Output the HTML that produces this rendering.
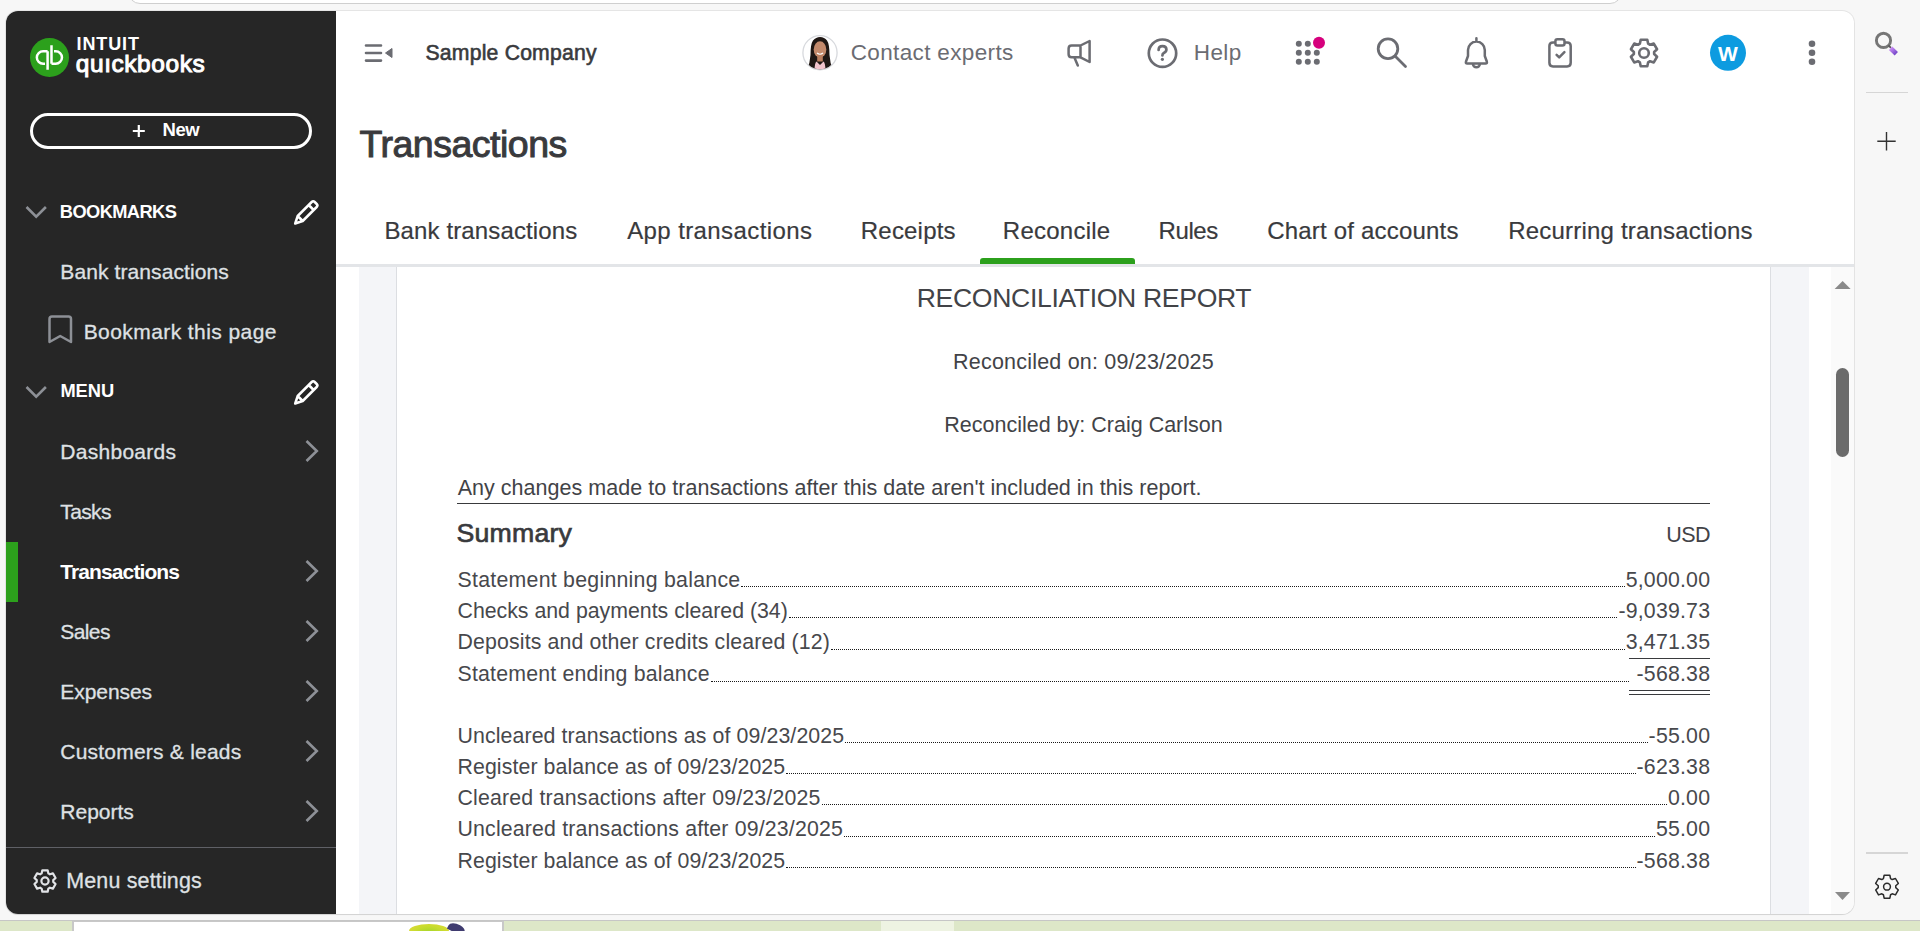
<!DOCTYPE html>
<html><head><meta charset="utf-8"><title>Transactions - Reconcile</title><style>
*{margin:0;padding:0}
html,body{width:1920px;height:931px;overflow:hidden;background:#f7f7f7}
body{position:relative;font-family:"Liberation Sans", sans-serif}
.a{position:absolute}
.t{position:absolute;white-space:nowrap;font-family:"Liberation Sans", sans-serif;z-index:2}
.row{position:absolute;z-index:2;left:457.5px;width:1252.5px;height:21.3px;display:flex;align-items:flex-end;font-size:21.3px;line-height:21.3px;color:#47484c;white-space:nowrap}
.row .lab{letter-spacing:0.35px}
.row .dots{flex:1;border-bottom:1px dotted #1a1a1a;margin:0 1px 4px 1px;height:0}
.row .num{letter-spacing:0.2px;margin-right:-0.2px}
svg.ov{position:absolute;left:0;top:0;z-index:1}
</style></head>
<body>
<div class="a" style="left:0px;top:0px;width:1920px;height:931px;background:#f7f7f7;"></div>
<div class="a" style="left:128px;top:-40px;width:1494px;height:44px;background:#ffffff;border:1px solid #cfcfcf;border-radius:12px;box-sizing:border-box;"></div>
<div class="a" style="left:0px;top:920px;width:1920px;height:11px;background:#dde7c8;"></div>
<div class="a" style="left:0px;top:920px;width:1920px;height:1px;background:#c6c6c6;"></div>
<div class="a" style="left:72px;top:921px;width:432px;height:10px;background:#ffffff;border:2px solid #c8c8c8;border-bottom:none;border-top-width:1px;box-sizing:border-box;"></div>
<div class="a" style="left:881px;top:921px;width:73px;height:10px;background:#eef3e2;"></div>
<div class="a" style="left:409px;top:924px;width:40px;height:14px;background:radial-gradient(ellipse at 50% 100%, #86cf2a 0%, #c8dc2e 60%, #e6d83a 100%);border-radius:50% 50% 0 0;"></div>
<div class="a" style="left:448px;top:924px;width:17px;height:9px;background:#3f3b6f;border-radius:90% 60% 0 0;transform:rotate(28deg);"></div>
<div class="a" style="left:6px;top:11px;width:1848px;height:903px;background:#ffffff;border-radius:12px;box-shadow:0 0 0 1px rgba(0,0,0,0.07), 0 1px 1px rgba(0,0,0,0.08);overflow:hidden;"></div>
<div class="a" style="left:6px;top:11px;width:330px;height:903px;background:#262626;border-radius:12px 0 0 12px;"></div>
<div class="t" style="left:76.50px;top:34.56px;font-size:18px;line-height:18px;font-weight:bold;color:#fff;letter-spacing:0.9px;">INTUIT</div>
<div class="t" style="left:75.80px;top:52.26px;font-size:24.5px;line-height:24.5px;font-weight:normal;color:#fff;letter-spacing:0.55px;-webkit-text-stroke:1.0px #fff;">qu&#305;ckbooks</div>
<div class="a" style="left:30px;top:113px;width:282px;height:36px;background:transparent;border:3px solid #fff;border-radius:18px;box-sizing:border-box;"></div>
<div class="t" style="left:162.50px;top:121.14px;font-size:18.5px;line-height:18.5px;font-weight:bold;color:#fff;letter-spacing:-0.4px;">New</div>
<div class="t" style="left:59.80px;top:202.51px;font-size:18.3px;line-height:18.3px;font-weight:bold;color:#fff;letter-spacing:-0.6px;">BOOKMARKS</div>
<div class="t" style="left:60.30px;top:261.32px;font-size:21px;line-height:21px;font-weight:normal;color:#dfe1e4;letter-spacing:0.1px;-webkit-text-stroke:0.3px #dfe1e4;">Bank transactions</div>
<div class="t" style="left:83.70px;top:321.22px;font-size:21px;line-height:21px;font-weight:normal;color:#dfe1e4;letter-spacing:0.42px;-webkit-text-stroke:0.3px #dfe1e4;">Bookmark this page</div>
<div class="t" style="left:60.40px;top:382.21px;font-size:18.3px;line-height:18.3px;font-weight:bold;color:#fff;letter-spacing:0px;">MENU</div>
<div class="t" style="left:60.30px;top:441.22px;font-size:21px;line-height:21px;font-weight:normal;color:#dfe1e4;letter-spacing:0.28px;-webkit-text-stroke:0.3px #dfe1e4;">Dashboards</div>
<div class="t" style="left:60.30px;top:501.22px;font-size:21px;line-height:21px;font-weight:normal;color:#dfe1e4;letter-spacing:-0.65px;-webkit-text-stroke:0.3px #dfe1e4;">Tasks</div>
<div class="t" style="left:60.30px;top:561.22px;font-size:21px;line-height:21px;font-weight:bold;color:#ffffff;letter-spacing:-0.9px;">Transactions</div>
<div class="t" style="left:60.30px;top:621.22px;font-size:21px;line-height:21px;font-weight:normal;color:#dfe1e4;letter-spacing:-0.6px;-webkit-text-stroke:0.3px #dfe1e4;">Sales</div>
<div class="t" style="left:60.30px;top:681.22px;font-size:21px;line-height:21px;font-weight:normal;color:#dfe1e4;letter-spacing:-0.06px;-webkit-text-stroke:0.3px #dfe1e4;">Expenses</div>
<div class="t" style="left:60.30px;top:741.22px;font-size:21px;line-height:21px;font-weight:normal;color:#dfe1e4;letter-spacing:0.22px;-webkit-text-stroke:0.3px #dfe1e4;">Customers &amp; leads</div>
<div class="t" style="left:60.30px;top:801.22px;font-size:21px;line-height:21px;font-weight:normal;color:#dfe1e4;letter-spacing:0.0px;-webkit-text-stroke:0.3px #dfe1e4;">Reports</div>
<div class="a" style="left:6px;top:542px;width:12px;height:60px;background:#2ca01c;"></div>
<div class="a" style="left:6px;top:847px;width:330px;height:1px;background:#5f6066;"></div>
<div class="t" style="left:66.20px;top:871.18px;font-size:21.4px;line-height:21.4px;font-weight:normal;color:#dfe1e4;letter-spacing:0.2px;-webkit-text-stroke:0.3px #dfe1e4;">Menu settings</div>
<div class="t" style="left:425.50px;top:41.75px;font-size:21.2px;line-height:21.2px;font-weight:normal;color:#393a3d;letter-spacing:0.2px;-webkit-text-stroke:0.6px #393a3d;">Sample Company</div>
<div class="t" style="left:850.75px;top:42.20px;font-size:22.5px;line-height:22.5px;font-weight:normal;color:#6b6c72;letter-spacing:0.35px;">Contact experts</div>
<div class="t" style="left:1193.75px;top:42.20px;font-size:22.5px;line-height:22.5px;font-weight:normal;color:#6b6c72;letter-spacing:0.4px;">Help</div>
<div class="t" style="left:1728.00px;top:42.52px;font-size:21px;line-height:21px;font-weight:bold;color:#fff;letter-spacing:0px;transform:translateX(-50%);">W</div>
<div class="a" style="left:1866px;top:92px;width:42px;height:1px;background:#d6d6d6;"></div>
<div class="a" style="left:1866px;top:852px;width:42px;height:2px;background:#d6d6d6;"></div>
<div class="t" style="left:359.50px;top:125.51px;font-size:37.5px;line-height:37.5px;font-weight:normal;color:#393a3d;letter-spacing:-0.5px;-webkit-text-stroke:1.0px #393a3d;">Transactions</div>
<div class="t" style="left:384.40px;top:218.68px;font-size:24px;line-height:24px;font-weight:normal;color:#393a3d;letter-spacing:0.13px;-webkit-text-stroke:0.2px #393a3d;">Bank transactions</div>
<div class="t" style="left:627.20px;top:218.68px;font-size:24px;line-height:24px;font-weight:normal;color:#393a3d;letter-spacing:0.4px;-webkit-text-stroke:0.2px #393a3d;">App transactions</div>
<div class="t" style="left:860.80px;top:218.68px;font-size:24px;line-height:24px;font-weight:normal;color:#393a3d;letter-spacing:0.2px;-webkit-text-stroke:0.2px #393a3d;">Receipts</div>
<div class="t" style="left:1002.80px;top:218.68px;font-size:24px;line-height:24px;font-weight:normal;color:#393a3d;letter-spacing:0.25px;-webkit-text-stroke:0.2px #393a3d;">Reconcile</div>
<div class="t" style="left:1158.50px;top:218.68px;font-size:24px;line-height:24px;font-weight:normal;color:#393a3d;letter-spacing:-0.4px;-webkit-text-stroke:0.2px #393a3d;">Rules</div>
<div class="t" style="left:1267.20px;top:218.68px;font-size:24px;line-height:24px;font-weight:normal;color:#393a3d;letter-spacing:0.2px;-webkit-text-stroke:0.2px #393a3d;">Chart of accounts</div>
<div class="t" style="left:1508.20px;top:218.68px;font-size:24px;line-height:24px;font-weight:normal;color:#393a3d;letter-spacing:0.2px;-webkit-text-stroke:0.2px #393a3d;">Recurring transactions</div>
<div class="a" style="left:980px;top:258px;width:155px;height:6px;background:#2ca01c;border-radius:3px 3px 0 0;"></div>
<div class="a" style="left:336px;top:264px;width:1518px;height:3px;background:#e3e5e8;"></div>
<div class="a" style="left:359px;top:267px;width:37px;height:647px;background:#f4f5f8;"></div>
<div class="a" style="left:396px;top:267px;width:1px;height:647px;background:#dcdee2;"></div>
<div class="a" style="left:1770px;top:267px;width:1px;height:647px;background:#dcdee2;"></div>
<div class="a" style="left:1771px;top:267px;width:38px;height:647px;background:#f4f5f8;"></div>
<div class="a" style="left:1831px;top:267px;width:23px;height:647px;background:#fafafa;border-radius:0 0 12px 0;"></div>
<div class="a" style="left:1836px;top:368px;width:13px;height:89px;background:#6b6b6b;border-radius:6.5px;"></div>
<div class="t" style="left:1084.00px;top:285.38px;font-size:26.6px;line-height:26.6px;font-weight:normal;color:#424347;letter-spacing:-0.35px;transform:translateX(-50%);">RECONCILIATION REPORT</div>
<div class="t" style="left:1083.50px;top:352.20px;font-size:21.5px;line-height:21.5px;font-weight:normal;color:#424347;letter-spacing:0.2px;transform:translateX(-50%);">Reconciled on: 09/23/2025</div>
<div class="t" style="left:1083.50px;top:415.00px;font-size:21.5px;line-height:21.5px;font-weight:normal;color:#424347;letter-spacing:0.0px;transform:translateX(-50%);">Reconciled by: Craig Carlson</div>
<div class="t" style="left:457.70px;top:477.60px;font-size:21.5px;line-height:21.5px;font-weight:normal;color:#424347;letter-spacing:0.03px;">Any changes made to transactions after this date aren't included in this report.</div>
<div class="a" style="left:457px;top:503px;width:1253px;height:1px;background:#393a3d;"></div>
<div class="t" style="left:456.50px;top:520.30px;font-size:26.7px;line-height:26.7px;font-weight:normal;color:#393a3d;letter-spacing:0.2px;-webkit-text-stroke:0.7px #393a3d;">Summary</div>
<div class="t" style="right:210.20px;top:524.80px;font-size:21.5px;line-height:21.5px;font-weight:normal;color:#424347;letter-spacing:-0.6px;">USD</div>
<div class="row" style="top:569.97px;"><span class="lab" style="letter-spacing:0.26px">Statement beginning balance</span><span class="dots"></span><span class="num">5,000.00</span></div>
<div class="row" style="top:600.57px;"><span class="lab" style="letter-spacing:0.0px">Checks and payments cleared (34)</span><span class="dots"></span><span class="num">-9,039.73</span></div>
<div class="row" style="top:632.27px;"><span class="lab" style="letter-spacing:0.14px">Deposits and other credits cleared (12)</span><span class="dots"></span><span class="num">3,471.35</span></div>
<div class="row" style="top:664.37px;"><span class="lab" style="letter-spacing:0.2px">Statement ending balance</span><span class="dots" style="margin-right:8px"></span><span class="num">-568.38</span></div>
<div class="row" style="top:725.97px;"><span class="lab" style="letter-spacing:0.11px">Uncleared transactions as of 09/23/2025</span><span class="dots"></span><span class="num">-55.00</span></div>
<div class="row" style="top:757.07px;"><span class="lab" style="letter-spacing:0.1px">Register balance as of 09/23/2025</span><span class="dots"></span><span class="num">-623.38</span></div>
<div class="row" style="top:788.17px;"><span class="lab" style="letter-spacing:0.18px">Cleared transactions after 09/23/2025</span><span class="dots"></span><span class="num">0.00</span></div>
<div class="row" style="top:819.37px;"><span class="lab" style="letter-spacing:0.17px">Uncleared transactions after 09/23/2025</span><span class="dots"></span><span class="num">55.00</span></div>
<div class="row" style="top:850.97px;"><span class="lab" style="letter-spacing:0.1px">Register balance as of 09/23/2025</span><span class="dots"></span><span class="num">-568.38</span></div>
<div class="a" style="left:1629px;top:658px;width:81px;height:1px;background:#393a3d;"></div>
<div class="a" style="left:1629px;top:690px;width:81px;height:1px;background:#393a3d;"></div>
<div class="a" style="left:1629px;top:694px;width:81px;height:1px;background:#393a3d;"></div>
<svg class="ov" width="1920" height="931" viewBox="0 0 1920 931">
<circle cx="49.5" cy="57.5" r="19.5" fill="#2ca01c"/>
<path d="M47.6 51.25 H43.1 A6.25 6.25 0 0 0 43.1 63.75 H45 M47.6 51.25 V69.8" stroke="#fff" stroke-width="2.5" fill="none"/>
<path d="M51.5 63.75 H55.7 A6.25 6.25 0 0 0 55.7 51.25 H54 M51.5 63.75 V45.3" stroke="#fff" stroke-width="2.5" fill="none"/>
<path d="M138.8 125 V137 M132.8 131 H144.8" stroke="#fff" stroke-width="2.2"/>
<path d="M26.5 207 L36.2 216.7 L45.9 207" stroke="#8d9096" stroke-width="2.6" fill="none"/>
<g transform="translate(-0.8,1.5)"><path d="M296 222 L298.5 214.5 L312.5 200.5 Q314 199 315.5 200.5 L317.5 202.5 Q319 204 317.5 205.5 L303.5 219.5 Z M309.5 203.5 L314.5 208.5 M298.5 214.5 L303.5 219.5" stroke="#fff" stroke-width="2.5" fill="none" stroke-linejoin="round"/></g>
<path d="M49.5 319 Q49.5 316.5 52 316.5 H68.5 Q71 316.5 71 319 V342 L60.2 336 L49.5 342 Z" stroke="#8d9096" stroke-width="2.5" fill="none" stroke-linejoin="round"/>
<path d="M26.5 387 L36.2 396.7 L45.9 387" stroke="#8d9096" stroke-width="2.6" fill="none"/>
<g transform="translate(-0.8,181.5)"><path d="M296 222 L298.5 214.5 L312.5 200.5 Q314 199 315.5 200.5 L317.5 202.5 Q319 204 317.5 205.5 L303.5 219.5 Z M309.5 203.5 L314.5 208.5 M298.5 214.5 L303.5 219.5" stroke="#fff" stroke-width="2.5" fill="none" stroke-linejoin="round"/></g>
<path d="M306.5 441 L316.8 451 L306.5 461" stroke="#8d9096" stroke-width="2.6" fill="none"/>
<path d="M306.5 561 L316.8 571 L306.5 581" stroke="#8d9096" stroke-width="2.6" fill="none"/>
<path d="M306.5 621 L316.8 631 L306.5 641" stroke="#8d9096" stroke-width="2.6" fill="none"/>
<path d="M306.5 681 L316.8 691 L306.5 701" stroke="#8d9096" stroke-width="2.6" fill="none"/>
<path d="M306.5 741 L316.8 751 L306.5 761" stroke="#8d9096" stroke-width="2.6" fill="none"/>
<path d="M306.5 801 L316.8 811 L306.5 821" stroke="#8d9096" stroke-width="2.6" fill="none"/>
<path d="M41.62 873.42 L42.34 870.33 L47.66 870.33 L48.38 873.42 L49.88 874.29 L52.91 873.36 L55.57 877.97 L53.25 880.13 L53.25 881.87 L55.57 884.03 L52.91 888.64 L49.88 887.71 L48.38 888.58 L47.66 891.67 L42.34 891.67 L41.62 888.58 L40.12 887.71 L37.09 888.64 L34.43 884.03 L36.75 881.87 L36.75 880.13 L34.43 877.97 L37.09 873.36 L40.12 874.29 Z" stroke="#e1e3e6" stroke-width="2.2" fill="none" stroke-linejoin="round"/><circle cx="45" cy="881" r="3.6" stroke="#e1e3e6" stroke-width="2.2" fill="none"/>
<path d="M366 45.5 H381 M366 53 H381 M366 60.6 H381" stroke="#6b6c72" stroke-width="2.6" stroke-linecap="round"/>
<path d="M392 48.5 L385.5 53 L392 57.5 Z" fill="#6b6c72" stroke="#6b6c72" stroke-width="1" stroke-linejoin="round"/>
<defs><clipPath id="avc"><circle cx="820" cy="52.75" r="16.6"/></clipPath></defs>
<circle cx="820" cy="52.75" r="17.1" fill="#ffffff" stroke="#d7d9dd" stroke-width="1.3"/>
<g clip-path="url(#avc)"><path d="M806 72 Q810 64 810.5 55 Q810.5 44 813 40.5 Q816 37 820 37 Q824.5 37 827 40.5 Q829.5 44 829.5 55 Q830 64 834 72 Z" fill="#1f1714"/>
<ellipse cx="820" cy="49.5" rx="6.3" ry="8.2" fill="#c48a6c"/><rect x="817.2" y="55" width="5.6" height="6.5" fill="#b97e60"/>
<path d="M814.5 72 Q814.5 63 816.5 61.5 L820 65 L823.5 61.5 Q825.5 63 825.5 72 Z" fill="#f2c4cd"/><path d="M817 53 Q820 55.5 823 53" stroke="#ffffff" stroke-width="1.2" fill="none"/></g>
<path d="M1080.5 45.5 H1071.6 Q1068.6 45.5 1068.6 48.5 V54.3 Q1068.6 57.3 1071.6 57.3 H1080.5 Z M1080.5 45.5 L1089.6 41 V62 L1080.5 57.3 M1074.5 57.8 L1077.8 65.5" stroke="#6b6c72" stroke-width="2.5" fill="none" stroke-linejoin="round" stroke-linecap="round"/>
<circle cx="1162.5" cy="53.2" r="13.7" stroke="#6b6c72" stroke-width="2.7" fill="none"/>
<path d="M1158.6 50 Q1158.6 46.2 1162.5 46.2 Q1166.4 46.2 1166.4 49.6 Q1166.4 51.8 1163.8 53 Q1162.4 53.7 1162.4 55.5" stroke="#6b6c72" stroke-width="2.7" fill="none" stroke-linecap="round"/><circle cx="1162.4" cy="59.3" r="1.6" fill="#6b6c72"/>
<circle cx="1298.8" cy="43.8" r="3" fill="#6b6c72"/>
<circle cx="1307.8" cy="43.8" r="3" fill="#6b6c72"/>
<circle cx="1298.8" cy="52.8" r="3" fill="#6b6c72"/>
<circle cx="1307.8" cy="52.8" r="3" fill="#6b6c72"/>
<circle cx="1316.8" cy="52.8" r="3" fill="#6b6c72"/>
<circle cx="1298.8" cy="61.8" r="3" fill="#6b6c72"/>
<circle cx="1307.8" cy="61.8" r="3" fill="#6b6c72"/>
<circle cx="1316.8" cy="61.8" r="3" fill="#6b6c72"/>
<circle cx="1319" cy="42.7" r="6" fill="#d6007d"/>
<circle cx="1388" cy="48.75" r="9.8" stroke="#6b6c72" stroke-width="2.8" fill="none"/><path d="M1395.5 56.5 L1405.5 66.5" stroke="#6b6c72" stroke-width="2.8" stroke-linecap="round"/>
<path d="M1468 56 V50 A8.4 8.4 0 0 1 1484.8 50 V56 L1486.8 61.5 Q1487.4 63.5 1485.6 63.5 H1467.2 Q1465.4 63.5 1466 61.5 Z M1476.4 38.2 V41.4 M1472.9 63.8 A3.5 3.5 0 0 0 1479.9 63.8" stroke="#6b6c72" stroke-width="2.5" fill="none" stroke-linejoin="round" stroke-linecap="round"/>
<path d="M1555.4 42.4 H1553 Q1549.4 42.4 1549.4 46 V62.8 Q1549.4 66.4 1553 66.4 H1567.1 Q1570.7 66.4 1570.7 62.8 V46 Q1570.7 42.4 1567.1 42.4 H1564.5" stroke="#6b6c72" stroke-width="2.5" fill="none"/><rect x="1555.4" y="39.2" width="9.1" height="6.2" rx="2" stroke="#6b6c72" stroke-width="2.5" fill="none"/><path d="M1556.6 54.8 L1559.2 57.4 L1564.4 52.2" stroke="#6b6c72" stroke-width="2.5" fill="none" stroke-linecap="round" stroke-linejoin="round"/>
<path d="M1639.85 43.68 L1640.71 39.80 L1647.29 39.80 L1648.15 43.68 L1650.00 44.75 L1653.78 43.55 L1657.07 49.25 L1654.14 51.93 L1654.14 54.07 L1657.07 56.75 L1653.78 62.45 L1650.00 61.25 L1648.15 62.32 L1647.29 66.20 L1640.71 66.20 L1639.85 62.32 L1638.00 61.25 L1634.22 62.45 L1630.93 56.75 L1633.86 54.07 L1633.86 51.93 L1630.93 49.25 L1634.22 43.55 L1638.00 44.75 Z" stroke="#6b6c72" stroke-width="2.6" fill="none" stroke-linejoin="round"/><circle cx="1644" cy="53" r="4.8" stroke="#6b6c72" stroke-width="2.6" fill="none"/>
<circle cx="1728" cy="52.8" r="18" fill="#0d9be0"/>
<circle cx="1812" cy="43.75" r="3.3" fill="#6b6c72"/>
<circle cx="1812" cy="52.7" r="3.3" fill="#6b6c72"/>
<circle cx="1812" cy="61.7" r="3.3" fill="#6b6c72"/>
<defs><linearGradient id="pg" x1="0" y1="0" x2="1" y2="1"><stop offset="0" stop-color="#c98cf5"/><stop offset="1" stop-color="#7446c8"/></linearGradient></defs>
<circle cx="1883.5" cy="40.4" r="7.1" stroke="#767676" stroke-width="2.9" fill="none"/><path d="M1888.5 45.4 L1891 47.9" stroke="#5a5a5a" stroke-width="2"/><path d="M1890.6 48.3 L1896.3 53.8" stroke="url(#pg)" stroke-width="4.8"/>
<path d="M1886.5 132 V150.5 M1877.3 141.2 H1895.7" stroke="#333" stroke-width="1.4"/>
<path d="M1883.42 878.66 L1884.15 875.25 L1889.85 875.25 L1890.58 878.66 L1892.17 879.58 L1895.49 878.50 L1898.34 883.45 L1895.75 885.78 L1895.75 887.62 L1898.34 889.95 L1895.49 894.90 L1892.17 893.82 L1890.58 894.74 L1889.85 898.15 L1884.15 898.15 L1883.42 894.74 L1881.83 893.82 L1878.51 894.90 L1875.66 889.95 L1878.25 887.62 L1878.25 885.78 L1875.66 883.45 L1878.51 878.50 L1881.83 879.58 Z" stroke="#2b2b2b" stroke-width="1.5" fill="none" stroke-linejoin="round"/><circle cx="1887" cy="886.7" r="3.4" stroke="#2b2b2b" stroke-width="1.5" fill="none"/>
<path d="M1834.6 289 L1842.6 281 L1850.6 289 Z" fill="#8a8a8a"/>
<path d="M1835 892 L1842.5 900 L1850 892 Z" fill="#8a8a8a"/>
</svg>
</body></html>
